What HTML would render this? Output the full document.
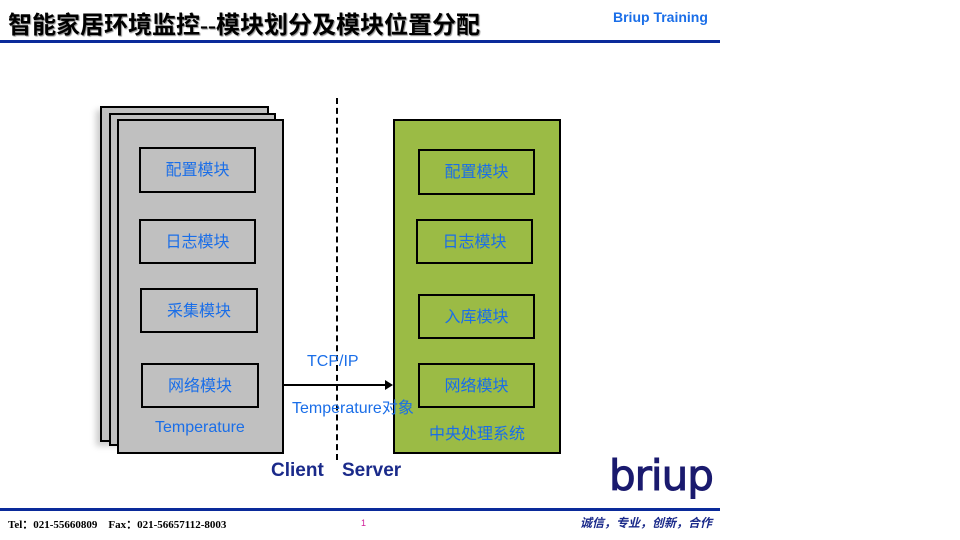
<!DOCTYPE html>
<html><head><meta charset="utf-8"><style>
body{margin:0;width:960px;height:540px;background:#fff;position:relative;overflow:hidden;font-family:"Liberation Sans","Noto Sans CJK SC",sans-serif}
.a{position:absolute}
.card{position:absolute;background:#c0c0c0;border:2px solid #000;box-sizing:border-box}
.box{position:absolute;border:2px solid #000;box-sizing:border-box;color:#1a6ee8;font-size:16px;display:flex;align-items:center;justify-content:center;padding-bottom:4px}
.t{position:absolute;color:#1a6ee8;font-size:16px;white-space:nowrap}
</style></head><body>
<div class="a" style="left:8px;top:5px;font-size:24px;font-family:'Liberation Serif','Noto Sans CJK SC',sans-serif;font-weight:bold;color:#000;text-shadow:1px 1px 1px #888">智能家居环境监控--模块划分及模块位置分配</div>
<div class="a" style="left:613px;top:9px;font-size:14px;font-weight:bold;color:#1a6ee8">Briup Training</div>
<div class="a" style="left:0;top:40px;width:720px;height:3px;background:#0a2a9a"></div>
<div class="card" style="left:100px;top:106px;width:169px;height:336px;box-shadow:-4px 4px 6px #ccc"></div>
<div class="card" style="left:109px;top:113px;width:167px;height:333px"></div>
<div class="card" style="left:117px;top:119px;width:167px;height:335px"></div>
<div class="box" style="left:139px;top:147px;width:117px;height:46px">配置模块</div>
<div class="box" style="left:139px;top:219px;width:117px;height:45px">日志模块</div>
<div class="box" style="left:140px;top:288px;width:118px;height:45px">采集模块</div>
<div class="box" style="left:141px;top:363px;width:118px;height:45px">网络模块</div>
<div class="t" style="left:155px;top:419px">Temperature</div>
<div class="a" style="left:336px;top:98px;height:362px;border-left:2px dashed #000"></div>
<div class="a" style="left:393px;top:119px;width:168px;height:335px;background:#9bbb45;border:2px solid #000;box-sizing:border-box"></div>
<div class="box" style="left:418px;top:149px;width:117px;height:46px">配置模块</div>
<div class="box" style="left:416px;top:219px;width:117px;height:45px">日志模块</div>
<div class="box" style="left:418px;top:294px;width:117px;height:45px">入库模块</div>
<div class="box" style="left:418px;top:363px;width:117px;height:45px">网络模块</div>
<div class="t" style="left:429px;top:420px">中央处理系统</div>
<div class="a" style="left:284px;top:384px;width:104px;height:2px;background:#000"></div>
<div class="a" style="left:385px;top:380px;border-left:8px solid #000;border-top:5px solid transparent;border-bottom:5px solid transparent"></div>
<div class="t" style="left:307px;top:353px">TCP/IP</div>
<div class="t" style="left:292px;top:394px">Temperature对象</div>
<div class="a" style="left:271px;top:460px;font-size:19px;font-weight:bold;color:#1a2a8a">Client</div>
<div class="a" style="left:342px;top:460px;font-size:19px;font-weight:bold;color:#1a2a8a">Server</div>
<div class="a" style="left:609px;top:451px;font-size:42px;font-family:'DejaVu Sans',sans-serif;color:#1a1a6e;letter-spacing:-1px;-webkit-text-stroke:1px #1a1a6e">briup</div>
<div class="a" style="left:0;top:508px;width:720px;height:3px;background:#0a2a9a"></div>
<div class="a" style="left:8px;top:516px;font-size:11px;font-weight:bold;font-family:'Liberation Serif',serif">Tel：021-55660809&nbsp;&nbsp;&nbsp;&nbsp;Fax：021-56657112-8003</div>
<div class="a" style="left:361px;top:518px;font-size:9px;color:#d0209a">1</div>
<div class="a" style="left:580px;top:514px;font-size:12px;font-weight:bold;font-style:italic;color:#1a2a8a">诚信，专业，创新，合作</div>
</body></html>
